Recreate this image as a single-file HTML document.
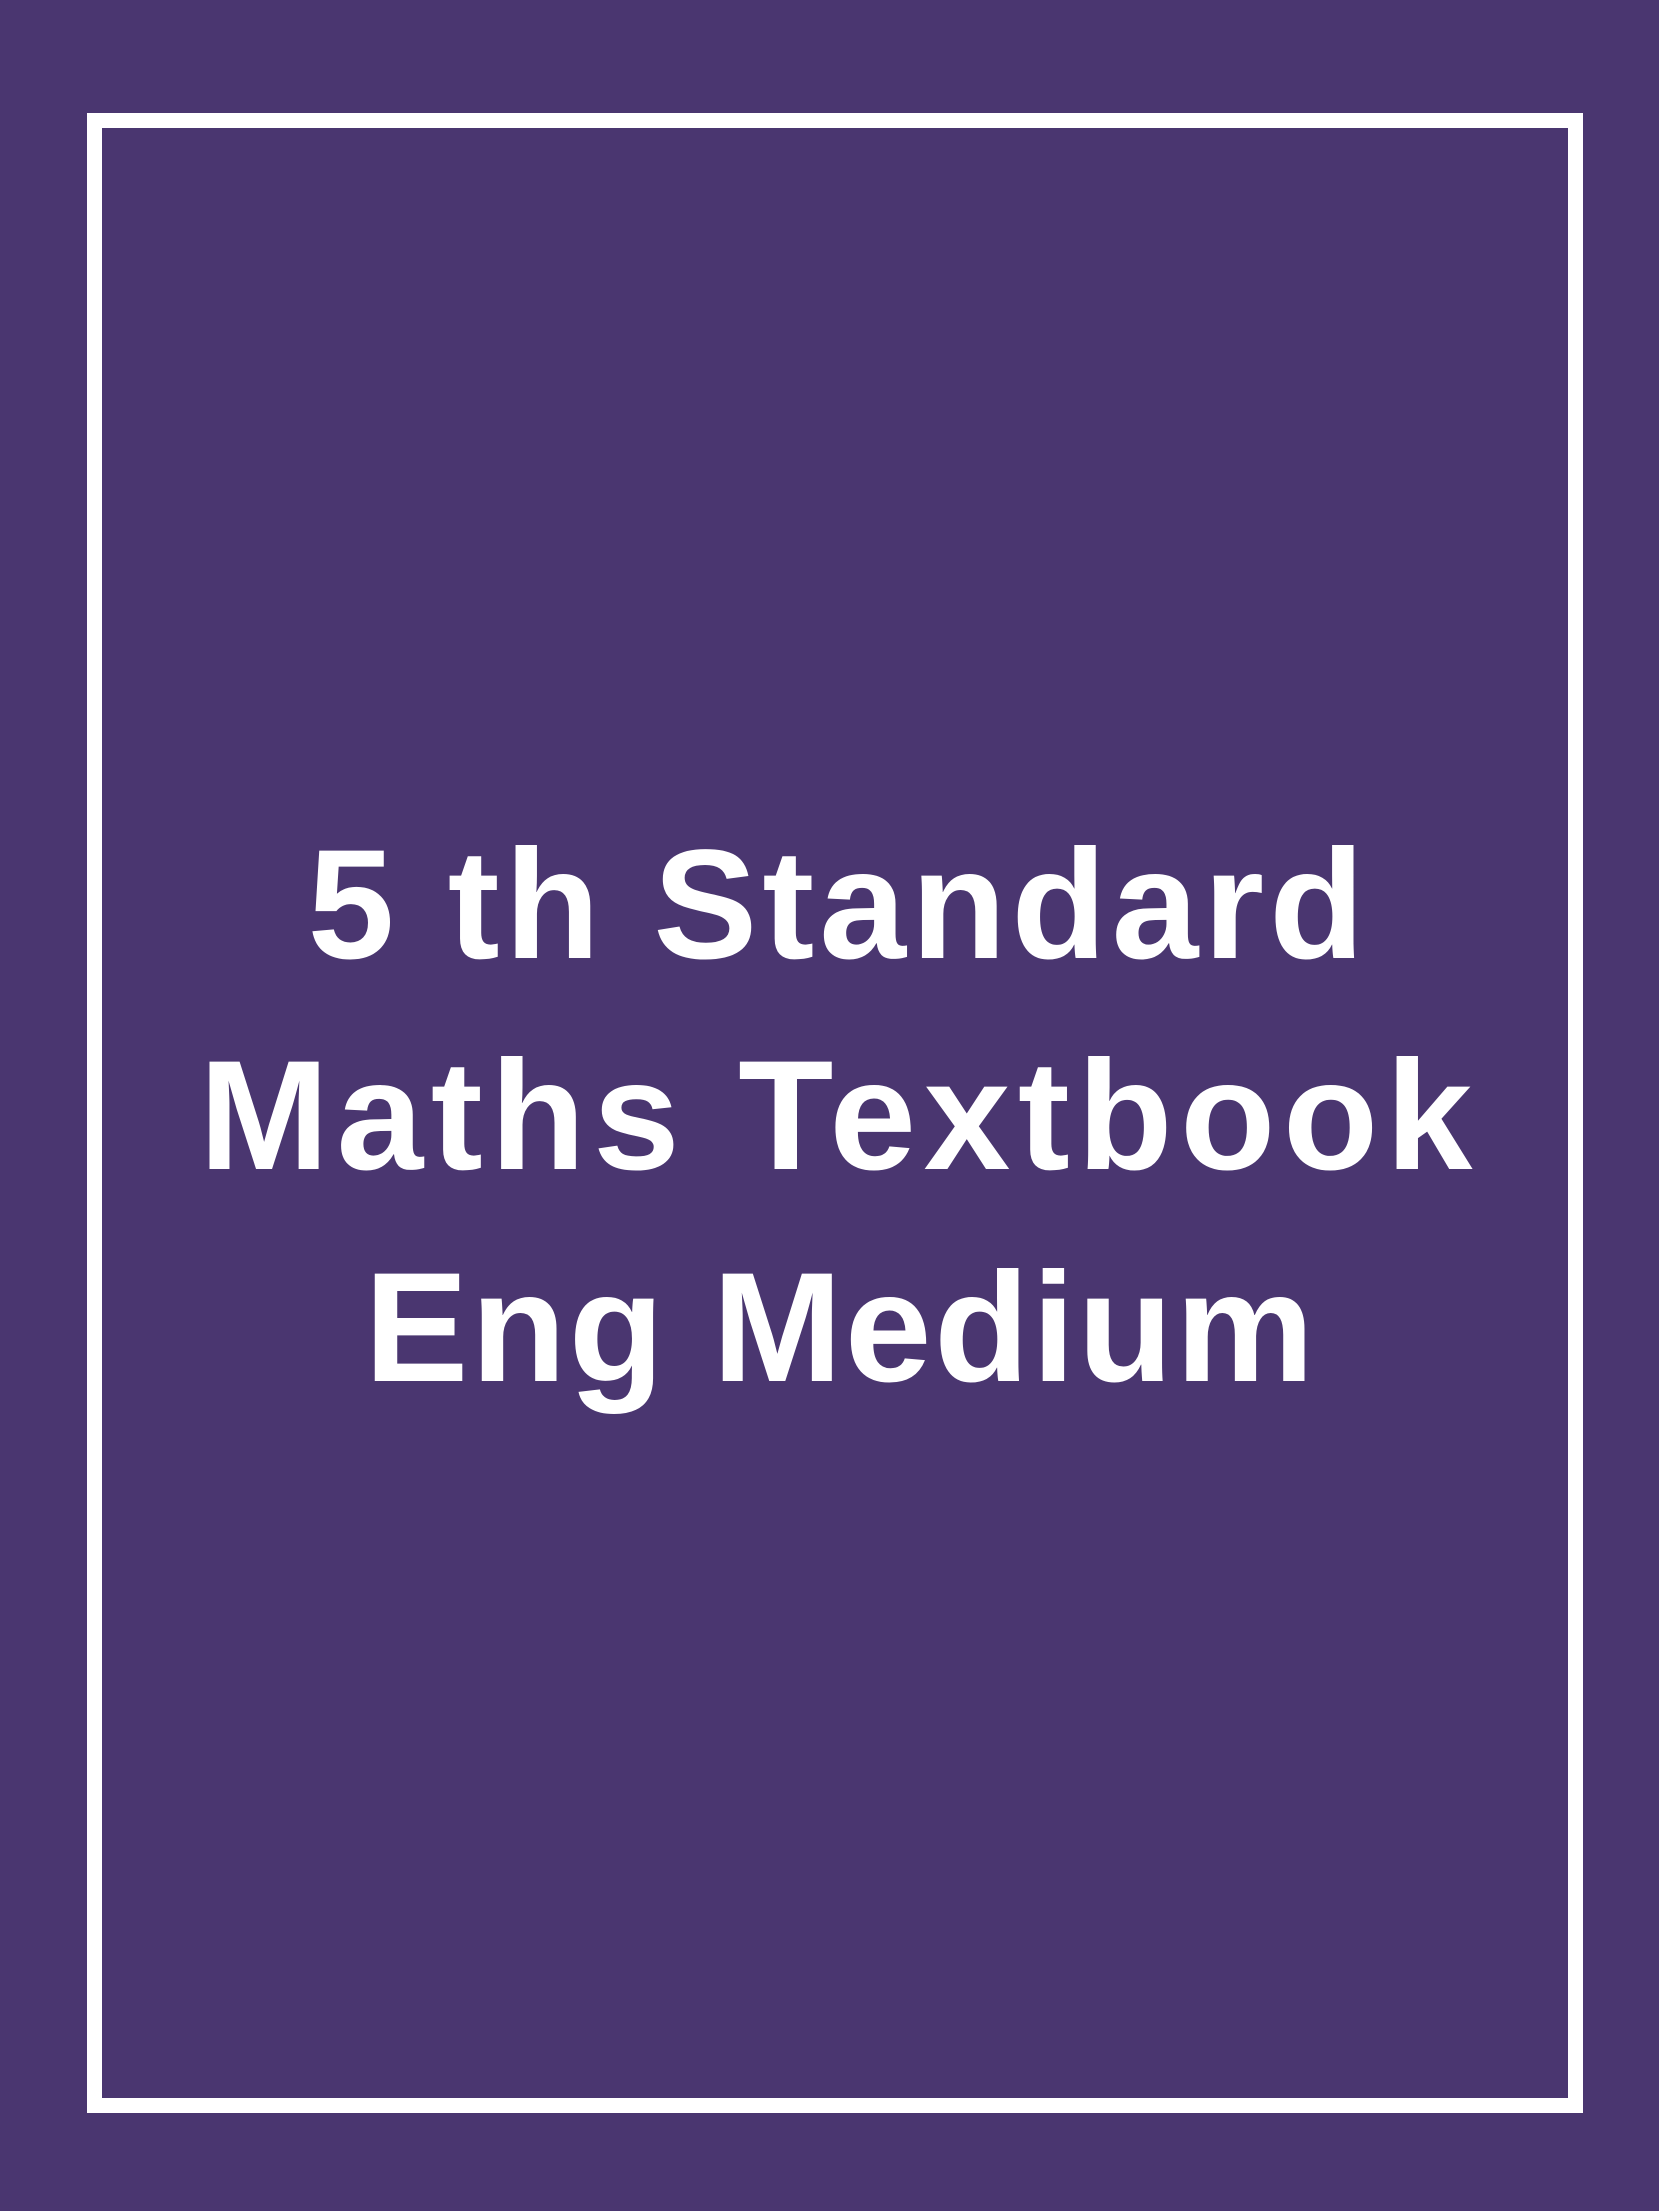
<!DOCTYPE html>
<html><head><meta charset="utf-8">
<style>
html,body{margin:0;padding:0;}
body{width:1659px;height:2211px;background:#4a3670;position:relative;overflow:hidden;
font-family:"Liberation Sans",sans-serif;}
.frame{position:absolute;left:87px;top:113px;width:1496px;height:2000px;box-sizing:border-box;border:15px solid #fff;}
.l{position:absolute;left:0;width:1659px;text-align:center;color:#fff;font-weight:bold;font-size:156px;line-height:1;white-space:nowrap;box-sizing:border-box;}
</style></head>
<body>
<div class="frame"></div>
<div class="l" style="top:827px;padding-left:18px;letter-spacing:5px">5 th Standard</div>
<div class="l" style="top:1038px;padding-left:20px;letter-spacing:7.5px">Maths Textbook</div>
<div class="l" style="top:1250px;padding-left:22px;letter-spacing:2.5px">Eng Medium</div>
</body></html>
